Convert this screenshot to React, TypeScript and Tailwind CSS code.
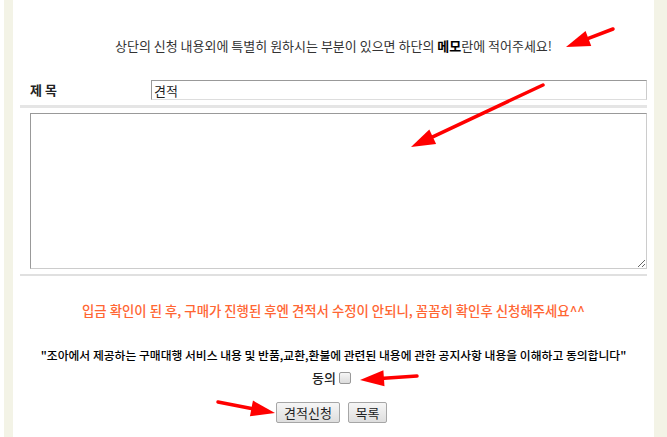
import React from 'react';

const Arrow = ({ x1, y1, x2, y2 }: { x1: number; y1: number; x2: number; y2: number }) => {
  // red hand-drawn style arrow, tip at (x2, y2)
  const dx = x2 - x1;
  const dy = y2 - y1;
  const len = Math.sqrt(dx * dx + dy * dy);
  const ux = dx / len;
  const uy = dy / len;
  const hl = 24;
  const hw = 8;
  const bx = x2 - ux * hl;
  const by = y2 - uy * hl;
  const head = `${x2},${y2} ${bx - uy * hw},${by + ux * hw} ${bx + uy * hw},${by - ux * hw}`;
  return (
    <g>
      <line x1={x1} y1={y1} x2={bx} y2={by} stroke="#ff0000" strokeWidth={3.5} strokeLinecap="round" />
      <polygon points={head} fill="#ff0000" />
    </g>
  );
};

export default function App() {
  return (
    <div className="relative w-[667px] h-[437px] overflow-hidden bg-white text-[12px] text-[#222]" style={{ fontFamily: '"Noto Sans CJK KR", "Noto Sans", sans-serif' }}>
      <div className="flex h-full pl-[4px]">
        <div className="w-[9px] bg-[#f3f3e6]" />
        <div className="w-[641px] px-[7px]">
          <p className="mt-[38px] text-center text-[13px] leading-[16px] text-[#333]">
            상단의 신청 내용외에 특별히 원하시는 부분이 있으면 하단의 <b className="text-black">메모</b>란에 적어주세요!
          </p>
          <div className="mt-[26px] flex items-center h-[20px]">
            <div className="w-[131px] pl-[10px] font-bold text-[13px]">제 목</div>
            <input
              defaultValue="견적"
              className="w-[496px] h-[20px] border border-t-[#999] border-l-[#999] border-r-[#ccc] border-b-[#ddd] px-[2px] text-[13px] outline-none"
            />
          </div>
          <div className="mt-[5px] h-[3px] bg-[#e5e5e5]" />
          <div className="mt-[5px] pl-[10px]">
            <textarea className="block w-[617px] h-[156px] border border-t-[#999] border-l-[#999] border-r-[#ccc] border-b-[#ccc] resize-y outline-none" />
          </div>
          <div className="mt-[5px] h-[2px] bg-[#e0e0e0]" />
          <p className="mt-[26px] text-center text-[13.4px] font-medium text-[#ff6633] leading-[16px]">
            입금 확인이 된 후, 구매가 진행된 후엔 견적서 수정이 안되니, 꼼꼼히 확인후 신청해주세요^^
          </p>
          <p className="mt-[29px] text-center text-[11.8px] font-medium text-black leading-[16px]">
            "조아에서 제공하는 구매대행 서비스 내용 및 반품,교환,환불에 관련된 내용에 관한 공지사항 내용을 이해하고 동의합니다"
          </p>
          <div className="mt-[7px] flex items-center justify-center gap-[3px] h-[16px] pr-[4px]">
            <span className="text-[13px] font-medium">동의</span>
            <span className="w-[12px] h-[12px] rounded-[2px] border border-[#999] bg-gradient-to-b from-[#f6f6f6] to-[#dcdcdc]" />
          </div>
          <div className="mt-[16px] flex justify-center gap-[8px] pr-[4px]">
            <button className="h-[21px] w-[64px] border border-[#a6a6a6] rounded-[2px] bg-gradient-to-b from-[#f6f6f6] to-[#dedede] text-[13px] leading-[18px] text-[#222]">견적신청</button>
            <button className="h-[21px] w-[39px] border border-[#a6a6a6] rounded-[2px] bg-gradient-to-b from-[#f6f6f6] to-[#dedede] text-[13px] leading-[18px] text-[#222]">목록</button>
          </div>
        </div>
        <div className="flex-1 bg-[#f3f3e6]" />
      </div>
      <svg className="absolute inset-0 pointer-events-none" width={667} height={437}>
        <Arrow x1={613} y1={29} x2={566} y2={47} />
        <Arrow x1={543} y1={85} x2={411} y2={147} />
        <Arrow x1={417} y1={376} x2={360} y2={380} />
        <Arrow x1={218} y1={402} x2={275} y2={413} />
      </svg>
    </div>
  );
}
